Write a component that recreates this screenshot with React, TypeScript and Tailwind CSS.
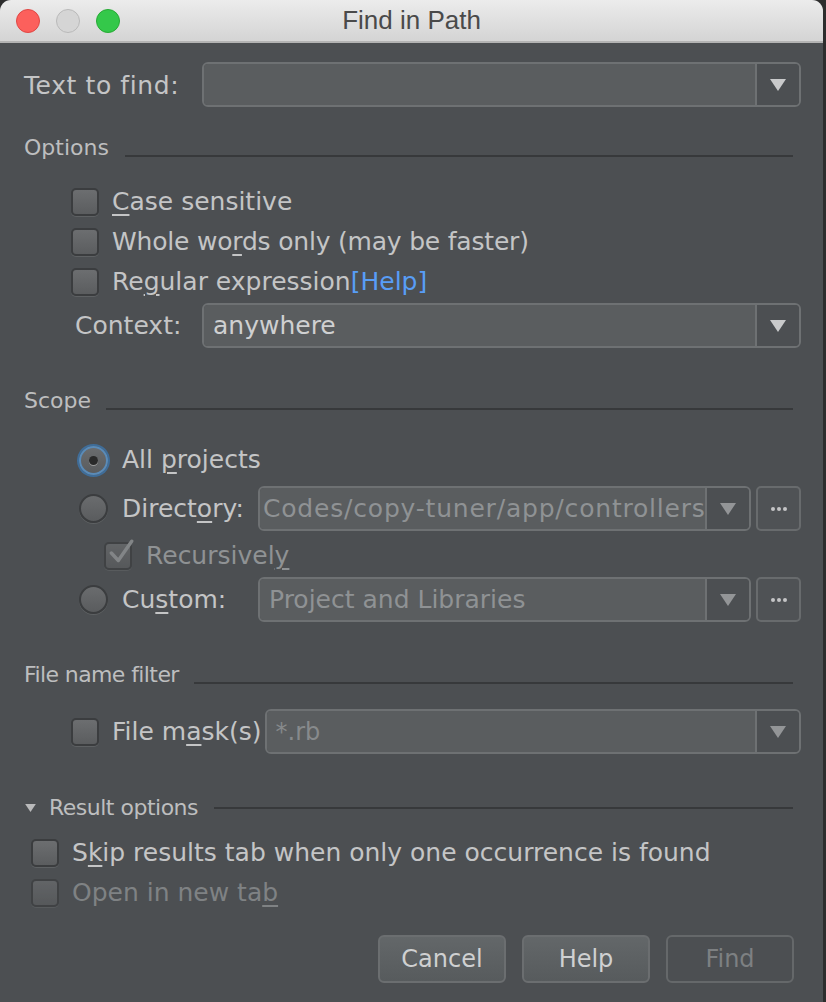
import React from "react";

const FONT = { fontFamily: '"DejaVu Sans", "Noto Sans", sans-serif' };

function U({ children }: { children: React.ReactNode }) {
  return <span className="underline decoration-[2px] underline-offset-[4px]">{children}</span>;
}

function Checkbox({ checked = false, disabled = false }: { checked?: boolean; disabled?: boolean }) {
  return (
    <div
      className={`relative w-[28px] h-[28px] shrink-0 rounded-[5px] border-[2px] border-[#3b3d3f] bg-gradient-to-b from-[#6c6e70] to-[#5b5d5f] shadow-[0_1px_0_#5e6163] ${disabled ? "opacity-70" : ""}`}
    >
      {checked && (
        <svg viewBox="0 0 28 28" className="absolute left-[0px] top-[-6px] w-[30px] h-[30px]">
          <path d="M5 14 L11.5 21 L24 3" fill="none" stroke="#9a9c9e" strokeWidth="3.2" strokeLinecap="round" strokeLinejoin="round" />
        </svg>
      )}
    </div>
  );
}

function Radio({ selected = false }: { selected?: boolean }) {
  return (
    <div
      className={`relative w-[29px] h-[29px] shrink-0 rounded-full flex items-center justify-center bg-gradient-to-b from-[#6a6c6e] to-[#5a5c5e] ${
        selected
          ? "border-[2px] border-[#5a8bb8] shadow-[0_0_0_2px_#3f6d99]"
          : "border-[2px] border-[#3b3d3f] shadow-[0_1px_0_#5e6163]"
      }`}
    >
      {selected && <div className="w-[9px] h-[9px] rounded-full bg-[#2a2a2a] shadow-[0_1px_0_#9a9a9a]" />}
    </div>
  );
}

function Arrow({ dim = false }: { dim?: boolean }) {
  return (
    <svg viewBox="0 0 16 12" className="w-[16px] h-[12px]">
      <path d="M0 0 H16 L8 12 Z" fill={dim ? "#939597" : "#c9cacb"} />
    </svg>
  );
}

function Combo({
  text,
  placeholder = false,
  dimArrow = false,
  dimText = false,
  textClass = "",
}: {
  text?: string;
  placeholder?: boolean;
  dimArrow?: boolean;
  dimText?: boolean;
  textClass?: string;
}) {
  return (
    <div className="flex-1 min-w-0 flex h-[45px] rounded-[6px] border-[2px] border-[#6e7173] overflow-hidden">
      <div className="flex-1 min-w-0 bg-[#5a5d5f] flex items-center pl-[9px] overflow-hidden whitespace-nowrap">
        {text && (
          <span
            className={`${placeholder ? "text-[#878a8c]" : dimText ? "text-[#8f9294]" : "text-[#cfd0d1]"} ${textClass}`}
          >
            {text}
          </span>
        )}
      </div>
      <div className="w-[2px] bg-[#6e7173]" />
      <div className="w-[42px] bg-[#4c4f52] flex items-center justify-center">
        <Arrow dim={dimArrow} />
      </div>
    </div>
  );
}

function Dots() {
  return (
    <div className="w-[45px] h-[45px] ml-[5px] shrink-0 rounded-[5px] border-[2px] border-[#686b6d] bg-[#4f5255] flex items-center justify-center gap-[2px]">
      <div className="w-[4px] h-[4px] rounded-full bg-[#c4c5c6]" />
      <div className="w-[4px] h-[4px] rounded-full bg-[#c4c5c6]" />
      <div className="w-[4px] h-[4px] rounded-full bg-[#c4c5c6]" />
    </div>
  );
}

function Header({
  title,
  gap,
  mt,
  center = false,
  triangle = false,
  textClass = "",
}: {
  title: string;
  gap: string;
  mt: string;
  center?: boolean;
  triangle?: boolean;
  textClass?: string;
}) {
  return (
    <div className={`flex h-[26px] ${mt} ${center ? "items-center" : "items-end"}`}>
      {triangle && (
        <svg viewBox="0 0 12 9" className="w-[11px] h-[8px] ml-[1px] mr-[13px]">
          <path d="M0 0 H12 L6 9 Z" fill="#b9babb" />
        </svg>
      )}
      <span className={`text-[22px] leading-[26px] text-[#bdbebf] whitespace-nowrap ${textClass}`}>{title}</span>
      <div className={`flex-1 h-[2px] bg-[#37393b] mr-[8px] ${gap} ${center ? "" : "mb-[4px]"}`} />
    </div>
  );
}

function Btn({ label, disabled = false }: { label: string; disabled?: boolean }) {
  return (
    <div
      className={`w-[128px] h-[48px] rounded-[6px] border-[2px] flex items-center justify-center text-[24px] ${
        disabled
          ? "border-[#65686a] bg-[#4c4f52] text-[#7d8082]"
          : "border-[#6b6e70] bg-gradient-to-b from-[#636769] to-[#575b5d] text-[#cfd0d1]"
      }`}
    >
      {label}
    </div>
  );
}

export default function App() {
  return (
    <div className="w-[826px] h-[1002px] bg-[#2d2d2d] overflow-hidden" style={FONT}>
      <div className="w-[823px] h-[1002px] bg-[#4c4f52] rounded-t-[11px] overflow-hidden flex flex-col">
        {/* Title bar */}
        <div className="relative h-[43px] shrink-0 bg-gradient-to-b from-[#ececec] to-[#d4d4d4] border-b-[2px] border-[#b3b3b3] flex items-center">
          <div className="flex items-center gap-[16px] pl-[16px]">
            <div className="w-[24px] h-[24px] rounded-full bg-[#fc605c] border border-[#df4744]" />
            <div className="w-[24px] h-[24px] rounded-full bg-[#d5d5d5] border border-[#b9b9b9]" />
            <div className="w-[24px] h-[24px] rounded-full bg-[#34c84a] border border-[#27aa35]" />
          </div>
          <div
            className="absolute inset-0 flex items-center justify-center text-[26px] text-[#4a4a4a]"
            style={{ fontFamily: '"Liberation Sans", "Noto Sans", sans-serif' }}
          >
            Find in Path
          </div>
        </div>

        {/* Content */}
        <div className="flex flex-col pl-[24px] pr-[22px] text-[25px] text-[#c4c5c6]">
          {/* Text to find */}
          <div className="flex items-center mt-[19px] h-[45px]">
            <span className="w-[178px] shrink-0 whitespace-nowrap tracking-[0.6px] pt-[3px]">Text to find:</span>
            <Combo />
          </div>

          <Header title="Options" gap="ml-[16px]" mt="mt-[28px]" />

          <div className="flex flex-col mt-[21px] pl-[47px]">
            <div className="flex items-center h-[40px] gap-[13px]">
              <Checkbox />
              <span>
                <U>C</U>ase sensitive
              </span>
            </div>
            <div className="flex items-center h-[40px] gap-[13px]">
              <Checkbox />
              <span className="tracking-[-0.2px]">
                Whole wo<U>r</U>ds only (may be faster)
              </span>
            </div>
            <div className="flex items-center h-[40px] gap-[13px]">
              <Checkbox />
              <span>
                Re<U>g</U>ular expression<span className="text-[#589df6]">[Help]</span>
              </span>
            </div>
          </div>

          {/* Context */}
          <div className="flex items-center mt-[1px] h-[45px]">
            <span className="w-[178px] shrink-0 pl-[51px] whitespace-nowrap">Context:</span>
            <Combo text="anywhere" />
          </div>

          <Header title="Scope" gap="ml-[15px]" mt="mt-[40px]" />

          <div className="flex flex-col pl-[55px]">
            <div className="flex items-center h-[40px] mt-[26px] gap-[14px]">
              <Radio selected />
              <span>
                All <U>p</U>rojects
              </span>
            </div>
            <div className="flex items-center h-[45px] mt-[6px]">
              <Radio />
              <span className="ml-[14px] w-[136px] shrink-0">
                Direct<U>o</U>ry:
              </span>
              <Combo
                text="Codes/copy-tuner/app/controllers"
                dimText
                dimArrow
                textClass="ml-[-6px] tracking-[0.8px]"
              />
              <Dots />
            </div>
            <div className="flex items-center h-[36px] mt-[7px] pl-[25px] gap-[14px]">
              <Checkbox checked disabled />
              <span className="text-[#8f9294]">
                Recursivel<U>y</U>
              </span>
            </div>
            <div className="flex items-center h-[45px] mt-[3px]">
              <Radio />
              <span className="ml-[14px] w-[136px] shrink-0">
                Cu<U>s</U>tom:
              </span>
              <Combo text="Project and Libraries" dimText dimArrow />
              <Dots />
            </div>
          </div>

          <Header title="File name filter" gap="ml-[15px]" mt="mt-[40px]" textClass="tracking-[-0.6px]" />

          <div className="flex items-center h-[45px] mt-[21px] pl-[47px]">
            <Checkbox />
            <span className="ml-[13px] whitespace-nowrap">
              File m<U>a</U>sk(s)
            </span>
            <div className="flex-1 ml-[3px] min-w-0 flex">
              <Combo text="*.rb" placeholder dimArrow textClass="text-[24px]" />
            </div>
          </div>

          <Header
            title="Result options"
            gap="ml-[16px]"
            mt="mt-[41px]"
            center
            triangle
            textClass="tracking-[-0.5px]"
          />

          <div className="flex flex-col mt-[12px] pl-[7px]">
            <div className="flex items-center h-[40px] gap-[13px]">
              <Checkbox />
              <span>
                S<U>k</U>ip results tab when only one occurrence is found
              </span>
            </div>
            <div className="flex items-center h-[40px] gap-[13px]">
              <Checkbox disabled />
              <span className="text-[#7f8284]">
                Open in new ta<U>b</U>
              </span>
            </div>
          </div>

          <div className="flex justify-end gap-[16px] mt-[22px] pr-[7px]">
            <Btn label="Cancel" />
            <Btn label="Help" />
            <Btn label="Find" disabled />
          </div>
        </div>
      </div>
    </div>
  );
}
